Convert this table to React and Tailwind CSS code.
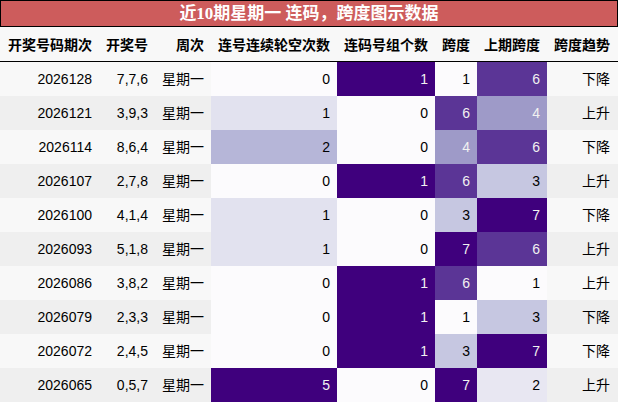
import React from 'react';

const rows = [
  ['2026128', '7,7,6', 0, 1, 1, 6, '下降'],
  ['2026121', '3,9,3', 1, 0, 6, 4, '上升'],
  ['2026114', '8,6,4', 2, 0, 4, 6, '下降'],
  ['2026107', '2,7,8', 0, 1, 6, 3, '上升'],
  ['2026100', '4,1,4', 1, 0, 3, 7, '下降'],
  ['2026093', '5,1,8', 1, 0, 7, 6, '上升'],
  ['2026086', '3,8,2', 0, 1, 6, 1, '上升'],
  ['2026079', '2,3,3', 0, 1, 1, 3, '下降'],
  ['2026072', '2,4,5', 0, 1, 3, 7, '下降'],
  ['2026065', '0,5,7', 5, 0, 7, 2, '上升'],
];

const headers = ['开奖号码期次', '开奖号', '周次', '连号连续轮空次数', '连码号组个数', '跨度', '上期跨度', '跨度趋势'];

const gapColors = {
  0: 'bg-[#fcfbfd] text-black',
  1: 'bg-[#e2e2ef] text-black',
  2: 'bg-[#b6b6d8] text-black',
  5: 'bg-[#3f007d] text-[#f1f1f1]',
};

const groupColors = {
  0: 'bg-[#fcfbfd] text-black',
  1: 'bg-[#3f007d] text-[#f1f1f1]',
};

const spanColors = {
  1: 'bg-[#fcfbfd] text-black',
  2: 'bg-[#e8e7f2] text-black',
  3: 'bg-[#c6c7e1] text-black',
  4: 'bg-[#9e9ac8] text-[#f1f1f1]',
  6: 'bg-[#5b3596] text-[#f1f1f1]',
  7: 'bg-[#3f007d] text-[#f1f1f1]',
};

const grid = 'grid grid-cols-[99px_56px_56px_126px_98px_42px_70px_70px]';
const cell = 'flex items-center justify-end pr-[7px]';

export default function App() {
  return (
    <div className="w-[618px] h-[404px] overflow-hidden bg-white font-['Liberation_Sans','Noto_Sans_CJK_SC',sans-serif] text-[14px] text-black">
      <div className="h-[27px] bg-[#cd5c5c] border border-black flex items-center justify-center text-white font-bold text-[17px] font-['Liberation_Serif','Noto_Sans_CJK_SC',serif]">
        近10期星期一 连码，跨度图示数据
      </div>
      <div className={`${grid} h-[35px] bg-[#f8f8f8] border-b border-black font-bold font-['Noto_Sans_CJK_SC',sans-serif]`}>
        {headers.map((h) => (
          <div key={h} className={cell}>{h}</div>
        ))}
      </div>
      {rows.map((r, i) => (
        <div key={r[0]} className={`${grid} h-[34px] ${i % 2 === 0 ? 'bg-[#f8f8f8]' : 'bg-[#efefef]'}`}>
          <div className={cell}>{r[0]}</div>
          <div className={cell}>{r[1]}</div>
          <div className={cell}>星期一</div>
          <div className={`${cell} ${gapColors[r[2]]}`}>{r[2]}</div>
          <div className={`${cell} ${groupColors[r[3]]}`}>{r[3]}</div>
          <div className={`${cell} ${spanColors[r[4]]}`}>{r[4]}</div>
          <div className={`${cell} ${spanColors[r[5]]}`}>{r[5]}</div>
          <div className={cell}>{r[6]}</div>
        </div>
      ))}
    </div>
  );
}
